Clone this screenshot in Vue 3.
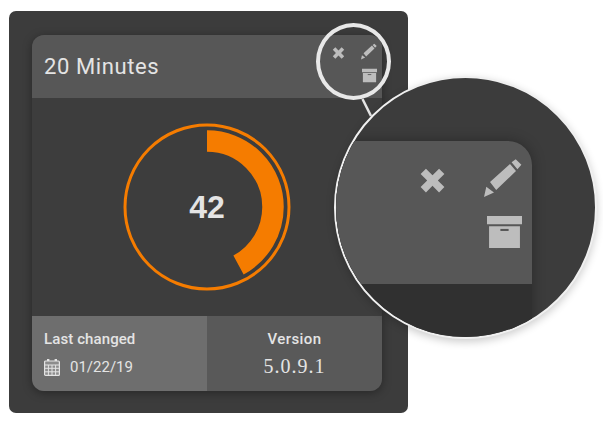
<template>
  <div class="stage">
    <div class="panel">
      <div class="card">
        <div class="card-head">
          <span class="title">20 Minutes</span>
          <div class="tools">
            <svg class="ic-x" viewBox="0 0 24 24"><path :d="xPath" /></svg>
            <svg class="ic-pen" viewBox="0 0 38 38"><path :d="penPath" /></svg>
            <svg class="ic-box" viewBox="0 0 34 31"><path :d="boxPath" /><rect x="13" y="12.5" width="8" height="2" class="slot" /></svg>
          </div>
        </div>
        <div class="card-body">
          <svg class="gauge" width="170" height="170" viewBox="0 0 170 170">
            <circle cx="85" cy="85" r="82" fill="none" stroke="#f57c00" stroke-width="3" />
            <circle
              cx="85"
              cy="85"
              :r="gaugeR"
              fill="none"
              stroke="#f57c00"
              stroke-width="21.5"
              :stroke-dasharray="dash"
              transform="rotate(-90 85 85)"
            />
          </svg>
          <span class="value">42</span>
        </div>
        <div class="card-foot">
          <div class="foot-left">
            <div class="foot-label">Last changed</div>
            <div class="foot-date">
              <svg class="ic-cal" viewBox="0 0 16 17">
                <path d="M3 0h2.4v3.5H3zM10.6 0H13v3.5h-2.4z" fill="#e4e4e4" />
                <rect x="0.6" y="2" width="14.8" height="14.4" rx="1" fill="#8c8c8c" stroke="#e4e4e4" stroke-width="1.2" />
                <path d="M1 6h14M1 9.3h14M1 12.8h14M4.4 6v10M8 6v10M11.6 6v10" stroke="#e4e4e4" stroke-width="1" />
              </svg>
              <span>01/22/19</span>
            </div>
          </div>
          <div class="foot-right">
            <div class="foot-label">Version</div>
            <div class="version">5.0.9.1</div>
          </div>
        </div>
      </div>
    </div>

    <svg class="connector" width="12" height="20" viewBox="0 0 12 20"><line x1="1.5" y1="1" x2="10" y2="18" stroke="#e6e6e6" stroke-width="2.5" /></svg>
    <div class="lens-small"></div>

    <div class="lens">
      <div class="lens-column">
        <div class="lens-card">
          <div class="lens-tools">
            <svg class="big-x" viewBox="0 0 24 24"><path :d="xPath" /></svg>
            <svg class="big-pen" viewBox="0 0 38 38"><path :d="penPath" /></svg>
            <svg class="big-box" viewBox="0 0 34 31"><path :d="boxPath" /><rect x="13" y="12.5" width="8" height="2" class="slot" /></svg>
          </div>
        </div>
      </div>
    </div>
  </div>
</template>

<script setup>
const xPath = 'M5.7 0.6 12 6.9 18.3 0.6 23.4 5.7 17.1 12 23.4 18.3 18.3 23.4 12 17.1 5.7 23.4 0.6 18.3 6.9 12 0.6 5.7Z'
const penPath = 'M0 38 2.3 27.7 10 33.4ZM6 23 26 5 32 12 12.2 31ZM27.6 3.3 31.7 0.3 37.4 5.8 33.4 10.3Z'
const boxPath = 'M0 0H34V8H0ZM2 10H32V31H2Z'

const gaugeR = 66
const circ = 2 * Math.PI * gaugeR
const dash = `${circ * 0.42} ${circ}`
</script>

<style>
body {
  background: #fff;
}
</style>

<style scoped>
.stage {
  position: relative;
  width: 603px;
  height: 423px;
  overflow: hidden;
  background: #fff;
  font-family: Roboto, "Liberation Sans", sans-serif;
  color: #e4e4e4;
}
.panel {
  position: absolute;
  left: 9px;
  top: 11px;
  width: 399px;
  height: 402px;
  box-sizing: border-box;
  padding: 24px 26px 22px 23px;
  background: #3c3c3c;
  border-radius: 7px;
}
.card {
  display: flex;
  flex-direction: column;
  height: 100%;
  border-radius: 12px;
  overflow: hidden;
  background: #3d3d3d;
  box-shadow: 0 2px 10px rgba(0, 0, 0, 0.35);
}
.card-head {
  display: flex;
  justify-content: space-between;
  height: 63px;
  flex-shrink: 0;
  background: #575757;
  padding: 8px 5px 0 12px;
  box-sizing: border-box;
}
.title {
  font-size: 22px;
  line-height: 46px;
  letter-spacing: 0.6px;
  padding-top: 1px;
}
.tools {
  display: grid;
  grid-template-columns: 13px 16px;
  grid-template-rows: 17px 15px;
  column-gap: 16px;
  row-gap: 8px;
  align-items: center;
}
.tools svg,
.lens-tools svg {
  display: block;
  fill: #bdbdbd;
}
.slot {
  fill: #575757;
}
.ic-x {
  width: 13px;
  height: 12px;
  margin-top: 3px;
}
.ic-pen {
  width: 16px;
  height: 17px;
}
.ic-box {
  grid-column: 2;
  width: 15px;
  height: 15px;
  justify-self: end;
}
.card-body {
  position: relative;
  flex: 1;
  display: flex;
  align-items: center;
  justify-content: center;
}
.gauge {
  display: block;
}
.value {
  position: absolute;
  left: 0;
  right: 0;
  text-align: center;
  font-family: "Liberation Sans", sans-serif;
  font-size: 32px;
  font-weight: 700;
}
.card-foot {
  display: flex;
  height: 75px;
  flex-shrink: 0;
  font-size: 15px;
}
.foot-left,
.foot-right {
  box-sizing: border-box;
  padding-top: 15px;
}
.foot-left {
  flex: 0 0 175px;
  background: #6e6e6e;
  padding-left: 12px;
}
.foot-right {
  flex: 1;
  background: #595959;
  text-align: center;
}
.foot-label {
  font-weight: 500;
  line-height: 17px;
  letter-spacing: 0.1px;
}
.foot-right .foot-label {
  letter-spacing: 0.4px;
}
.foot-date {
  display: flex;
  align-items: center;
  gap: 10px;
  margin-top: 11px;
  line-height: 17px;
}
.ic-cal {
  width: 16px;
  height: 17px;
}
.version {
  font-family: "Liberation Serif", serif;
  font-size: 20px;
  letter-spacing: 1px;
  line-height: 24px;
  margin-top: 6px;
}
.lens-small {
  position: absolute;
  left: 316px;
  top: 23px;
  width: 75px;
  height: 77px;
  box-sizing: border-box;
  border: 4px solid #e8e8e8;
  border-radius: 50%;
}
.connector {
  position: absolute;
  left: 361px;
  top: 98px;
}
.lens {
  position: absolute;
  left: 334px;
  top: 76px;
  width: 263px;
  height: 263px;
  box-sizing: border-box;
  border: 2px solid #f0f0f0;
  border-radius: 50%;
  background: #3c3c3c;
  overflow: hidden;
  box-shadow: 0 3px 8px rgba(0, 0, 0, 0.2);
  padding-top: 63px;
}
.lens-column {
  width: 196px;
  height: 200px;
  background: #303030;
  border-radius: 0 24px 0 0;
  box-shadow: 0 0 14px rgba(0, 0, 0, 0.3);
}
.lens-card {
  height: 143px;
  background: #575757;
  border-radius: 0 24px 0 0;
}
.lens-tools {
  display: grid;
  grid-template-columns: 25px 38px;
  grid-template-rows: 38px 32px;
  column-gap: 40px;
  row-gap: 19px;
  justify-content: end;
  align-items: center;
  padding: 18px 10px 0 0;
}
.big-x {
  width: 25px;
  height: 25px;
  margin: 4px 0 0 1px;
}
.big-pen {
  width: 38px;
  height: 38px;
}
.big-box {
  grid-column: 2;
  width: 35px;
  height: 32px;
  justify-self: end;
}
</style>
